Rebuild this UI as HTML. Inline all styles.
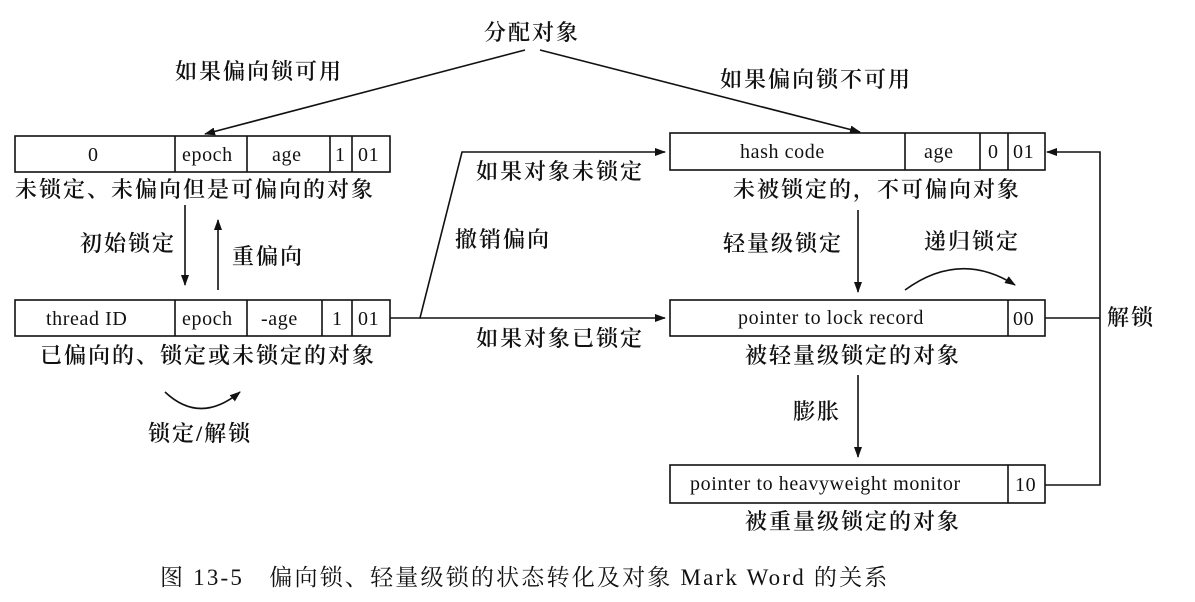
<!DOCTYPE html>
<html><head><meta charset="utf-8">
<style>
html,body{margin:0;padding:0;background:#fff;}
svg{display:block;}
text{font-family:"Liberation Serif","Noto Serif CJK SC","Noto Sans CJK SC",serif;fill:#111;font-size:22px;font-weight:600;letter-spacing:2px;}
.c{font-family:"Liberation Serif",serif;font-size:20px;font-weight:400;letter-spacing:0.6px;}
</style></head>
<body>
<svg width="1195" height="602" viewBox="0 0 1195 602" xmlns="http://www.w3.org/2000/svg">
<defs>
<marker id="a" markerWidth="11" markerHeight="8" refX="10" refY="4" orient="auto" markerUnits="userSpaceOnUse">
<path d="M0,0 L11,4 L0,8 z" fill="#111"/></marker>
</defs>
<g stroke="#111" stroke-width="1.6" fill="none">
<path d="M525,50 L205,134" marker-end="url(#a)"/>
<path d="M540,50 L860,132" marker-end="url(#a)"/>
<rect x="15" y="136" width="375" height="36"/>
<path d="M175,136V172M247,136V172M330,136V172M352,136V172"/>
<rect x="15" y="300" width="375" height="36"/>
<path d="M175,300V336M247,300V336M322,300V336M352,300V336"/>
<path d="M185,205V285" marker-end="url(#a)"/>
<path d="M218,290V220" marker-end="url(#a)"/>
<path d="M165,392 Q200,425 240,392" marker-end="url(#a)"/>
<path d="M390,318H420L462,152H665" marker-end="url(#a)"/>
<path d="M420,318H665" marker-end="url(#a)"/>
<rect x="670" y="133" width="375" height="37"/>
<path d="M905,133V170M980,133V170M1008,133V170"/>
<path d="M858,210V292" marker-end="url(#a)"/>
<path d="M905,290 Q960,250 1015,285" marker-end="url(#a)"/>
<rect x="670" y="300" width="375" height="36"/>
<path d="M1008,300V336"/>
<path d="M858,375V457" marker-end="url(#a)"/>
<rect x="670" y="465" width="375" height="38"/>
<path d="M1008,465V503"/>
<path d="M1045,318H1100"/>
<path d="M1045,485H1100V152H1047" marker-end="url(#a)"/>
</g>
<g>
<text x="484" y="40">分配对象</text>
<text x="175" y="79">如果偏向锁可用</text>
<text x="720" y="87">如果偏向锁不可用</text>
<text class="c" x="88" y="161">0</text>
<text class="c" x="182" y="161">epoch</text>
<text class="c" x="272" y="161">age</text>
<text class="c" x="335" y="161">1</text>
<text class="c" x="358" y="161">01</text>
<text x="15" y="197">未锁定、未偏向但是可偏向的对象</text>
<text x="80" y="251">初始锁定</text>
<text x="232" y="264">重偏向</text>
<text class="c" x="46" y="325">thread ID</text>
<text class="c" x="182" y="325">epoch</text>
<text class="c" x="261" y="325">-age</text>
<text class="c" x="332" y="325">1</text>
<text class="c" x="358" y="325">01</text>
<text x="40" y="363">已偏向的、锁定或未锁定的对象</text>
<text x="148" y="441">锁定/解锁</text>
<text x="476" y="179">如果对象未锁定</text>
<text x="455" y="247">撤销偏向</text>
<text x="476" y="346">如果对象已锁定</text>
<text class="c" x="740" y="158">hash code</text>
<text class="c" x="924" y="158">age</text>
<text class="c" x="988" y="158">0</text>
<text class="c" x="1013" y="158">01</text>
<text x="733" y="197">未被锁定的，不可偏向对象</text>
<text x="723" y="251">轻量级锁定</text>
<text x="924" y="249">递归锁定</text>
<text class="c" x="738" y="324">pointer to lock record</text>
<text class="c" x="1013" y="325">00</text>
<text x="745" y="363">被轻量级锁定的对象</text>
<text x="793" y="419">膨胀</text>
<text class="c" x="690" y="490">pointer to heavyweight monitor</text>
<text class="c" x="1015" y="491">10</text>
<text x="745" y="529">被重量级锁定的对象</text>
<text x="1107" y="325">解锁</text>
<text x="160" y="585" style="font-size:23px;font-weight:400;letter-spacing:2.2px">图 13-5　偏向锁、轻量级锁的状态转化及对象 Mark Word 的关系</text>
</g>
</svg>
</body></html>
